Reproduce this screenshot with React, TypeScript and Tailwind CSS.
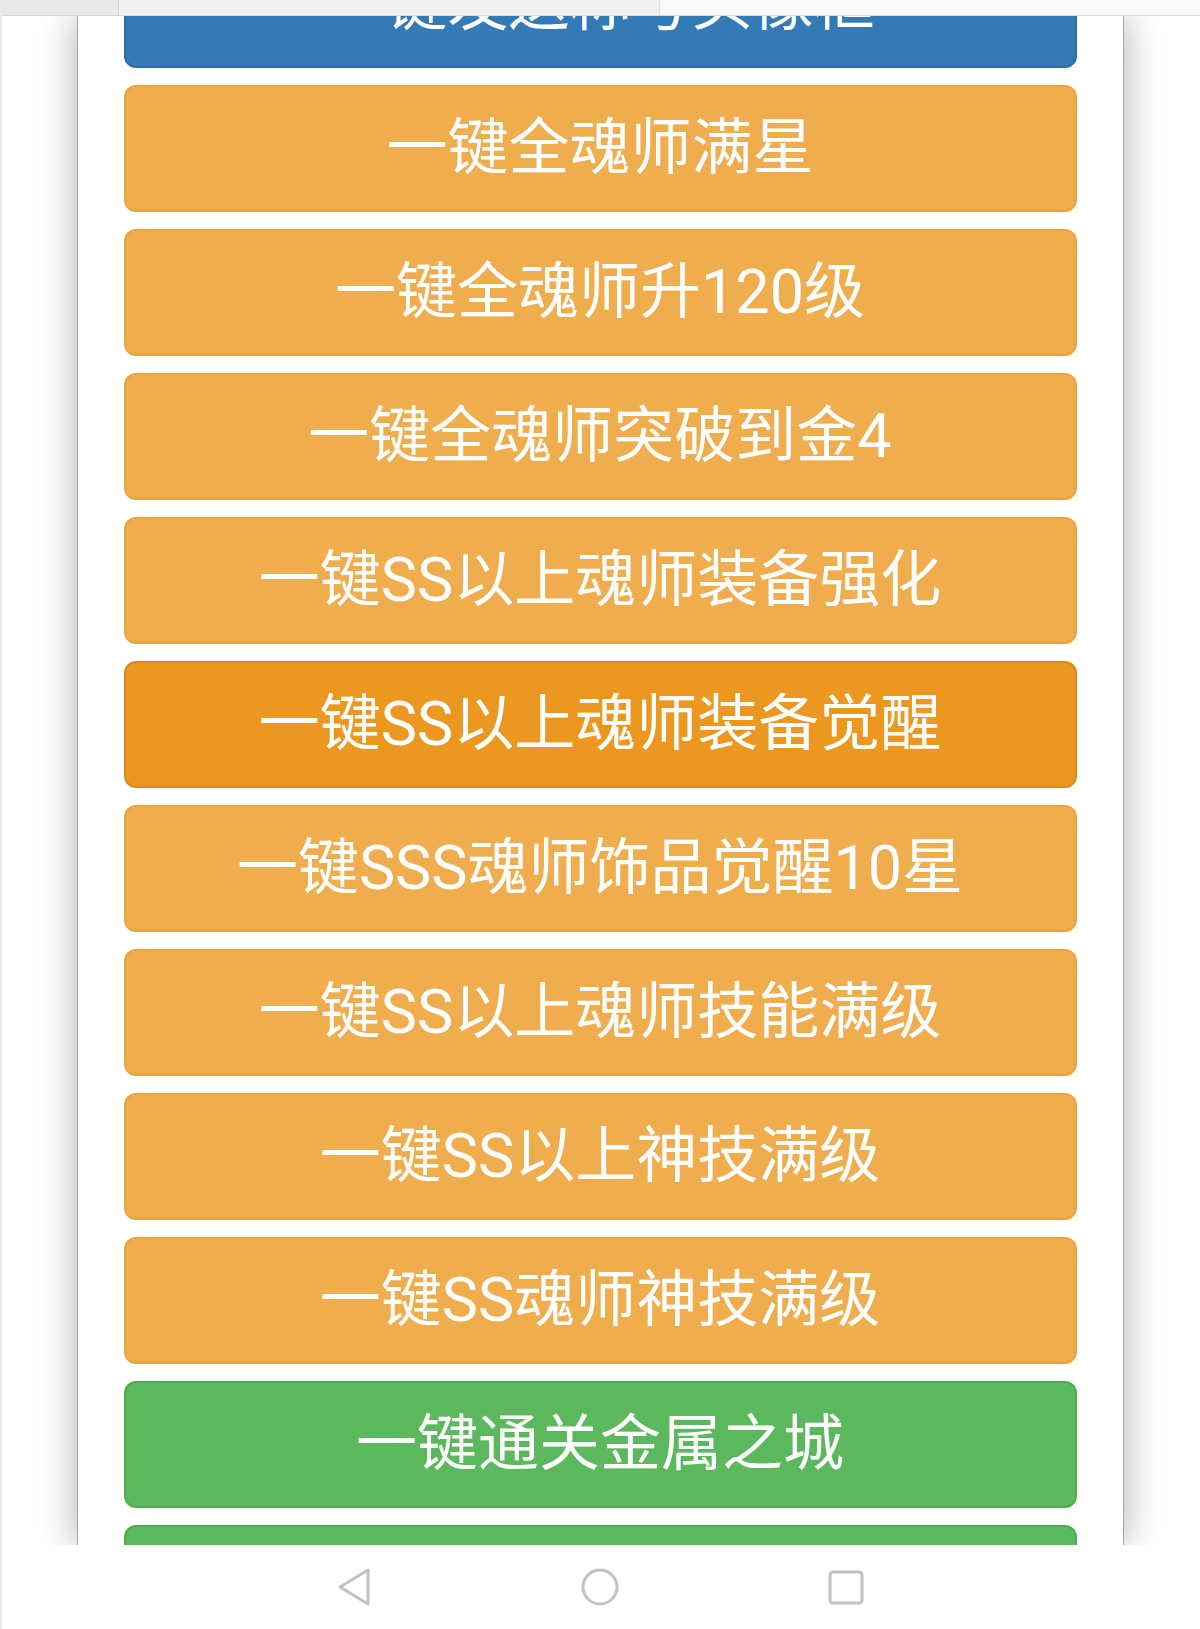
const actions: { label: string; tone: "blue" | "orange" | "orangeActive" | "green" }[] = [
  { label: "一键发送称号头像框", tone: "blue" },
  { label: "一键全魂师满星", tone: "orange" },
  { label: "一键全魂师升120级", tone: "orange" },
  { label: "一键全魂师突破到金4", tone: "orange" },
  { label: "一键SS以上魂师装备强化", tone: "orange" },
  { label: "一键SS以上魂师装备觉醒", tone: "orangeActive" },
  { label: "一键SSS魂师饰品觉醒10星", tone: "orange" },
  { label: "一键SS以上魂师技能满级", tone: "orange" },
  { label: "一键SS以上神技满级", tone: "orange" },
  { label: "一键SS魂师神技满级", tone: "orange" },
  { label: "一键通关金属之城", tone: "green" },
  { label: "一键通关星斗森林", tone: "green" },
];

const toneClass = {
  blue: "bg-[#337ab7] border-[#2e6da4]",
  orange: "bg-[#efad4e] border-[#eaa43e]",
  orangeActive: "bg-[#ec9820] border-[#d98a18]",
  green: "bg-[#5cb85c] border-[#4cae4c]",
};

function NavBar() {
  return (
    <div className="flex h-[84px] shrink-0 items-center justify-center gap-[209px] bg-white">
      <svg width="36" height="40" viewBox="0 0 36 40" fill="none">
        <path
          d="M32 3 L4 20 L32 37 Z"
          stroke="#c2c2c2"
          strokeWidth="3"
          strokeLinejoin="round"
        />
      </svg>
      <svg width="38" height="38" viewBox="0 0 38 38" fill="none">
        <circle cx="19" cy="19" r="17" stroke="#c2c2c2" strokeWidth="3" />
      </svg>
      <svg width="36" height="36" viewBox="0 0 36 36" fill="none">
        <rect x="2" y="3" width="32" height="31" rx="3" stroke="#c2c2c2" strokeWidth="3" />
      </svg>
    </div>
  );
}

export default function App() {
  return (
    <div className="relative flex h-[1629px] w-[1200px] flex-col overflow-hidden bg-white font-['Roboto','Noto_Sans_CJK_SC',sans-serif]">
      {/* browser strip at the top */}
      <div className="flex h-[16px] shrink-0 border-b border-[#d8d8d8]">
        <div className="w-[119px] border-r border-[#d4d4d4] bg-[#e9e9e9]" />
        <div className="w-[541px] border-r border-[#e2e2e2] bg-[#f0f0f0]" />
        <div className="flex-1 bg-[#f9f9f9]" />
      </div>

      <div className="relative min-h-0 flex-1 overflow-hidden">
        <div className="mx-auto flex h-full w-[1047px] flex-col border-x border-[#a9a9a9] bg-white shadow-[0_0_36px_rgba(0,0,0,0.32)]">
          <div className="mt-[-75px] flex flex-col gap-[17px] px-[46px]">
            {actions.map((a) => (
              <button
                key={a.label}
                className={`flex h-[127px] w-full shrink-0 items-center justify-center rounded-[12px] border-2 text-[61px] leading-none text-white ${toneClass[a.tone]}`}
              >
                {a.label}
              </button>
            ))}
          </div>
        </div>
      </div>

      <NavBar />

      <div className="absolute inset-y-0 left-0 w-[2px] bg-[#ebebeb]" />
    </div>
  );
}
